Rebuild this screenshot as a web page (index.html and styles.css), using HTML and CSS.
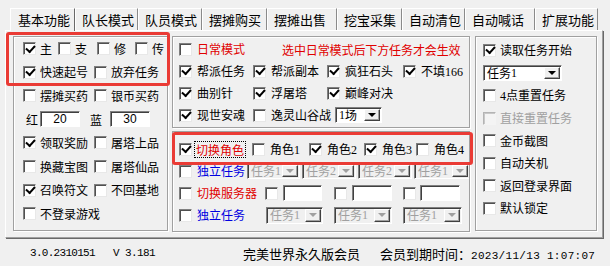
FILE: index.html
```html
<!DOCTYPE html>
<html lang="zh-CN">
<head>
<meta charset="utf-8">
<title>基本功能</title>
<link rel="stylesheet" href="styles.css">
</head>
<body>
<div class="window">
  <div class="tabs">
    <div class="tab sel">基本功能</div>
    <div class="tab">队长模式</div>
    <div class="tab">队员模式</div>
    <div class="tab">摆摊购买</div>
    <div class="tab">摆摊出售</div>
    <div class="tab">挖宝采集</div>
    <div class="tab">自动清包</div>
    <div class="tab">自动喊话</div>
    <div class="tab">扩展功能</div>
  </div>
  <div class="panel">
    <div class="group gleft">
      <div class="row r-first">
        <div class="cb c35"><span class="box on"></span><span class="t">主</span></div>
        <div class="cb c39"><span class="box"></span><span class="t">支</span></div>
        <div class="cb c38"><span class="box"></span><span class="t">修</span></div>
        <div class="cb"><span class="box"></span><span class="t">传</span></div>
      </div>
      <div class="row">
        <div class="cb c71"><span class="box on"></span><span class="t">快速起号</span></div>
        <div class="cb"><span class="box"></span><span class="t">放弃任务</span></div>
      </div>
      <div class="row">
        <div class="cb c71"><span class="box"></span><span class="t">摆摊买药</span></div>
        <div class="cb"><span class="box"></span><span class="t">银币买药</span></div>
      </div>
      <div class="row r-hp">
        <span class="lbl">红</span>
        <span class="edit e40">20</span>
        <span class="lbl l-blue">蓝</span>
        <span class="edit e40">30</span>
      </div>
      <div class="row">
        <div class="cb c71"><span class="box on"></span><span class="t">领取奖励</span></div>
        <div class="cb"><span class="box"></span><span class="t">屠塔上品</span></div>
      </div>
      <div class="row">
        <div class="cb c71"><span class="box"></span><span class="t">换藏宝图</span></div>
        <div class="cb"><span class="box"></span><span class="t">屠塔仙品</span></div>
      </div>
      <div class="row">
        <div class="cb c71"><span class="box on"></span><span class="t">召唤符文</span></div>
        <div class="cb"><span class="box"></span><span class="t">不回基地</span></div>
      </div>
      <div class="row">
        <div class="cb"><span class="box"></span><span class="t">不登录游戏</span></div>
      </div>
    </div>

    <div class="mid">
      <div class="group gmidtop">
        <div class="row">
          <div class="cb c103 red"><span class="box"></span><span class="t">日常模式</span></div>
          <span class="hint">选中日常模式后下方任务才会生效</span>
        </div>
        <div class="row">
          <div class="cb c74"><span class="box on"></span><span class="t">帮派任务</span></div>
          <div class="cb c74"><span class="box on"></span><span class="t">帮派副本</span></div>
          <div class="cb c76"><span class="box on"></span><span class="t">疯狂石头</span></div>
          <div class="cb"><span class="box on"></span><span class="t">不填<span class="num">166</span></span></div>
        </div>
        <div class="row">
          <div class="cb c74"><span class="box on"></span><span class="t">曲别针</span></div>
          <div class="cb c74"><span class="box on"></span><span class="t">浮屠塔</span></div>
          <div class="cb c76"><span class="box on"></span><span class="t">巅峰对决</span></div>
        </div>
        <div class="row">
          <div class="cb c74"><span class="box on"></span><span class="t">现世安魂</span></div>
          <div class="cb c82"><span class="box"></span><span class="t">逸灵山谷战</span></div>
          <div class="combo k47"><span class="val"><span class="num">1</span>场</span><span class="btn"></span></div>
        </div>
      </div>

      <div class="group gmidbot">
        <div class="row">
          <div class="cb c73 red"><span class="box on"></span><span class="focus">切换角色</span></div>
          <div class="cb c57"><span class="box"></span><span class="t">角色<span class="num">1</span></span></div>
          <div class="cb c55"><span class="box on"></span><span class="t">角色<span class="num">2</span></span></div>
          <div class="cb c52"><span class="box on"></span><span class="t">角色<span class="num">3</span></span></div>
          <div class="cb"><span class="box"></span><span class="t">角色<span class="num">4</span></span></div>
        </div>
        <div class="row r-ind">
          <div class="cb c68 blue"><span class="box"></span><span class="t">独立任务</span></div>
          <div class="combo dis k53"><span class="val">任务<span class="num">1</span></span><span class="btn"></span></div>
          <div class="combo dis k54"><span class="val">任务<span class="num">2</span></span><span class="btn"></span></div>
          <div class="combo dis k54"><span class="val">任务<span class="num">2</span></span><span class="btn"></span></div>
          <div class="combo dis k56"><span class="val">任务<span class="num">1</span></span><span class="btn"></span></div>
        </div>
        <div class="row">
          <div class="cb c86 red"><span class="box"></span><span class="t">切换服务器</span></div>
          <div class="srv"><span class="box"></span><span class="edit e39"></span></div>
          <div class="srv"><span class="box"></span><span class="edit e40"></span></div>
          <div class="srv"><span class="box"></span><span class="edit e40"></span></div>
        </div>
        <div class="row">
          <div class="cb c87 blue"><span class="box"></span><span class="t">独立任务</span></div>
          <div class="combo dis tall k57"><span class="val">任务<span class="num">1</span></span><span class="btn"></span></div>
          <div class="combo dis tall k58"><span class="val">任务<span class="num">1</span></span><span class="btn"></span></div>
          <div class="combo dis tall k59"><span class="val">任务<span class="num">1</span></span><span class="btn"></span></div>
        </div>
      </div>
    </div>

    <div class="group gright">
      <div class="row">
        <div class="cb"><span class="box on"></span><span class="t">读取任务开始</span></div>
      </div>
      <div class="row">
        <div class="combo k79"><span class="val">任务<span class="num">1</span></span><span class="btn"></span></div>
      </div>
      <div class="row">
        <div class="cb"><span class="box"></span><span class="t"><span class="num">4</span>点重置任务</span></div>
      </div>
      <div class="row">
        <div class="cb dis"><span class="box"></span><span class="t">直接重置任务</span></div>
      </div>
      <div class="row">
        <div class="cb"><span class="box"></span><span class="t">金币截图</span></div>
      </div>
      <div class="row">
        <div class="cb"><span class="box"></span><span class="t">自动关机</span></div>
      </div>
      <div class="row">
        <div class="cb"><span class="box"></span><span class="t">返回登录界面</span></div>
      </div>
      <div class="row">
        <div class="cb"><span class="box"></span><span class="t">默认锁定</span></div>
      </div>
    </div>
  </div>

  <div class="status">
    <span class="mono ver">3.0.2310151</span>
    <span class="mono vnum">V 3.181</span>
    <span class="member">完美世界永久版会员</span>
    <span class="expire">会员到期时间：<span class="mono date">2023/11/13 1:07:07</span></span>
  </div>

  <div class="redbox rb1"></div>
  <div class="redbox rb2"></div>
</div>
</body>
</html>
```

FILE: styles.css
```css
* { box-sizing: border-box; }

body {
  margin: 0;
  background: #f0f0f0;
  font-family: "Noto Sans CJK SC", "Liberation Sans", sans-serif;
  font-size: 12px;
  color: #000;
}

.window {
  position: relative;
  width: 610px;
  height: 266px;
  overflow: hidden;
  background: #f0f0f0;
}

/* ---------- tabs ---------- */
.tabs {
  display: flex;
  height: 30px;
  padding: 8px 0 0 10px;
}

.tab {
  flex: none;
  height: 22px;
  padding-left: 6px;
  font-size: 13px;
  line-height: 21px;
  border-top: 1px solid #fff;
  border-left: 1px solid #fff;
  border-right: 1px solid #8a8a8a;
  white-space: nowrap;
  background: #f0f0f0;
}

.tab:nth-child(1) { width: 65px; }
.tab:nth-child(2) { width: 63px; }
.tab:nth-child(3) { width: 64px; }
.tab:nth-child(4) { width: 65px; }
.tab:nth-child(5) { width: 70px; }
.tab:nth-child(6) { width: 65px; }
.tab:nth-child(7) { width: 63px; }
.tab:nth-child(8) { width: 70px; }
.tab:nth-child(9) { width: 63px; }

.tab.sel {
  position: relative;
  z-index: 2;
  height: 23px;
  padding-left: 7px;
  border-right-color: #696969;
}

/* ---------- panel ---------- */
.panel {
  display: flex;
  align-items: flex-start;
  margin-left: 5px;
  width: 598px;
  height: 208px;
  padding: 5px 0 0 7px;
  border-top: 1px solid #fff;
  border-left: 1px solid #fff;
  border-right: 1px solid #a0a0a0;
  border-bottom: 1px solid #a0a0a0;
  box-shadow: 1px 1px 0 #696969;
}

.group {
  flex: none;
  border: 1px solid #a0a0a0;
  box-shadow: inset 1px 1px 0 #fff, 1px 1px 0 #fff;
}

.gleft {
  width: 155px;
  height: 195px;
  padding: 0 0 0 9px;
}

.mid {
  flex: none;
  display: flex;
  flex-direction: column;
  gap: 3px;
  width: 298px;
  margin-left: 4px;
}

.gmidtop {
  height: 92px;
  padding: 1px 0 0 6px;
}

.gmidbot {
  height: 101px;
  padding: 6px 0 0 6px;
  overflow: hidden;
}

.gright {
  width: 122px;
  height: 195px;
  margin-left: 5px;
  padding: 2px 0 0 7px;
}

/* ---------- rows ---------- */
.row {
  display: flex;
  align-items: center;
  flex-wrap: nowrap;
  white-space: nowrap;
  height: 22px;
}

.gleft .row { height: 23.55px; }
.gright .row { height: 22.6px; }

/* ---------- checkboxes ---------- */
.cb {
  flex: none;
  display: flex;
  align-items: center;
  gap: 4px;
  line-height: 16px;
}

.gmidtop .cb, .gmidbot .cb { gap: 5px; }
.gmidbot .cb.c73 { gap: 3px; }

.box {
  flex: none;
  position: relative;
  width: 13px;
  height: 13px;
  background: #fff;
  border: 1px solid;
  border-color: #808080 #e8e8e8 #e8e8e8 #808080;
  box-shadow: inset 1px 1px 0 #505050;
}

.box.on::after {
  content: "";
  position: absolute;
  left: 2px;
  top: 1.5px;
  width: 7px;
  height: 4px;
  border-left: 2px solid #000;
  border-bottom: 2px solid #000;
  transform: rotate(-48deg);
}

.cb.dis { color: #a0a0a0; }
.cb.dis .box {
  background: #f4f4f4;
  border-color: #b4b4b4 #f4f4f4 #f4f4f4 #b4b4b4;
  box-shadow: inset 1px 1px 0 #c8c8c8;
}

.red { color: #e00000; }
.blue { color: #0000e0; }

.num {
  font-family: "Liberation Serif", serif;
  font-size: 12px;
}

.focus {
  outline: 1px dotted #000;
  outline-offset: 0;
  padding: 0 1px;
  line-height: 15px;
}

.hint {
  color: #e00000;
  letter-spacing: -0.1px;
}

/* column widths */
.c35 { width: 35px; }
.c38 { width: 38px; }
.c39 { width: 39px; }
.c52 { width: 52px; }
.c55 { width: 55px; }
.c57 { width: 57px; }
.c68 { width: 68px; }
.c71 { width: 71px; }
.c73 { width: 73px; }
.c74 { width: 74px; }
.c76 { width: 76px; }
.c82 { width: 82px; }
.c86 { width: 86px; }
.c87 { width: 87px; }
.c103 { width: 103px; }

/* ---------- HP / MP row ---------- */
.r-hp { padding-left: 3px; }
.lbl { width: 14px; flex: none; }
.l-blue { margin-left: 10px; width: 20px; }

.edit {
  flex: none;
  display: block;
  height: 16px;
  background: #fff;
  border: 1px solid;
  border-color: #808080 #fff #fff #808080;
  box-shadow: inset 1px 1px 0 #404040;
  text-align: center;
  font-family: "Liberation Sans", sans-serif;
  font-size: 12px;
  line-height: 14px;
}

.e39 { width: 39px; }
.e40 { width: 40px; }

.srv {
  flex: none;
  display: flex;
  align-items: center;
  gap: 5px;
  width: 69px;
}

.srv:last-child { gap: 4px; }

/* ---------- combo boxes ---------- */
.combo {
  flex: none;
  display: flex;
  align-items: stretch;
  height: 16px;
  background: #fff;
  border: 1px solid;
  border-color: #808080 #fff #fff #808080;
  box-shadow: inset 1px 1px 0 #404040;
  padding: 1px;
}

.combo.tall { height: 17px; }

.combo .val {
  flex: 1;
  display: flex;
  align-items: center;
  padding-left: 2px;
  line-height: 12px;
}

.combo .btn {
  flex: none;
  display: flex;
  align-items: center;
  justify-content: center;
  width: 16px;
  background: #f0f0f0;
  border: 1px solid;
  border-color: #fff #404040 #404040 #fff;
  box-shadow: inset -1px -1px 0 #a0a0a0;
}

.combo .btn::after {
  content: "";
  width: 0;
  height: 0;
  border-left: 4px solid transparent;
  border-right: 4px solid transparent;
  border-top: 4px solid #000;
}

.combo.dis {
  background: #f0f0f0;
  color: #a0a0a0;
}

.combo.dis .btn::after { border-top-color: #a0a0a0; }

.r-ind { gap: 2px; }
.r-ind .cb { margin-right: -2px; }

.k47 { width: 47px; }
.k53 { width: 53px; }
.k54 { width: 54px; }
.k56 { width: 56px; }
.k57 { width: 57px; margin-right: 11px; }
.k58 { width: 58px; margin-right: 11px; }
.k59 { width: 59px; }
.k79 { width: 79px; }

/* ---------- status bar ---------- */
.status {
  display: flex;
  align-items: center;
  height: 28px;
  padding: 2px 0 0 30px;
  font-size: 13px;
  white-space: nowrap;
}

.mono {
  font-family: "Liberation Mono", monospace;
  font-size: 11px;
}

.ver { width: 83px; letter-spacing: -0.7px; }
.vnum { width: 130px; letter-spacing: -0.6px; }
.member { width: 137px; }
.date { letter-spacing: 0.3px; }

/* ---------- red highlight boxes ---------- */
.redbox {
  position: absolute;
  border: 3px solid #ea3b35;
  border-radius: 3px;
  pointer-events: none;
}

.rb1 { left: 6px; top: 32px; width: 164px; height: 54px; }
.rb2 { left: 172px; top: 132px; width: 301px; height: 33px; }
```
